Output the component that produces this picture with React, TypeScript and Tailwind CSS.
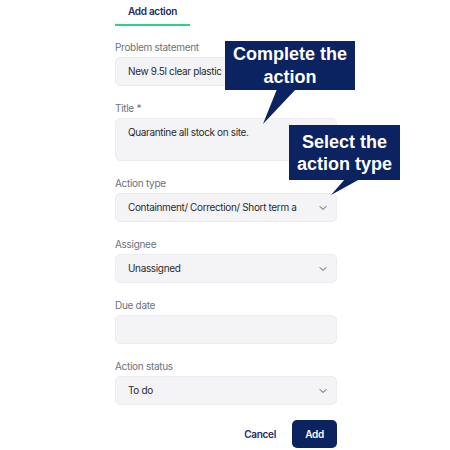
import React from "react";
import { ChevronDown } from "lucide-react";

const txt = "text-[10px] tracking-[-0.35px]";

function Label({ children }: { children: React.ReactNode }) {
  return (
    <div className={"text-[10px] tracking-[-0.3px] leading-[18px] mb-[1px] text-[#6b7280]"}>{children}</div>
  );
}

function Field({
  label,
  children,
}: {
  label: string;
  children: React.ReactNode;
}) {
  return (
    <div className="flex flex-col">
      <Label>{label}</Label>
      {children}
    </div>
  );
}

function Select({ value }: { value: string }) {
  return (
    <div className="h-[29px] rounded-[5px] bg-[#f4f4f6] border border-[#ececf0] flex items-center pl-[12px] pr-[7px]">
      <span className="text-[10px] tracking-[-0.35px] text-[#2b2b2b] whitespace-nowrap">
        {value}
      </span>
      <span className="flex-1" />
      <ChevronDown size={12} strokeWidth={2} className="text-[#4b5563]" />
    </div>
  );
}

export default function App() {
  return (
    <div
      className="relative w-[450px] h-[450px] bg-white overflow-hidden"
      style={{ fontFamily: "Inter, 'Noto Sans', sans-serif" }}
    >
      <div className="ml-[115px] w-[222px] flex flex-col">
        <div className="flex">
          <div className="px-[13px] pt-[4px] pb-[6px] border-b-2 border-[#2fd08a] text-[10px] tracking-[-0.3px] leading-[14px] font-semibold text-[#1e2a5e]">
            Add action
          </div>
        </div>
        <div className="mt-[12px] flex flex-col gap-[13px]">
          <Field label="Problem statement">
            <div className="h-[29px] rounded-[5px] bg-[#f4f4f6] border border-[#ececf0] flex items-center pl-[12px]">
              <span className={txt + " text-[#2b2b2b] whitespace-nowrap"}>
                New 9.5l clear plastic
              </span>
            </div>
          </Field>
          <Field label="Title *">
            <div className={"h-[43px] rounded-[5px] bg-[#f4f4f6] border border-[#ececf0] pl-[12px] pt-[6px] leading-[14px] text-[#2b2b2b] " + txt}>
              Quarantine all stock on site.
            </div>
          </Field>
          <Field label="Action type">
            <Select value="Containment/ Correction/ Short term a" />
          </Field>
          <Field label="Assignee">
            <Select value="Unassigned" />
          </Field>
          <Field label="Due date">
            <div className="h-[29px] rounded-[5px] bg-[#f4f4f6] border border-[#ececf0]" />
          </Field>
          <Field label="Action status">
            <Select value="To do" />
          </Field>
        </div>
        <div className="mt-[15px] flex justify-end items-center gap-[4px]">
          <button className="h-[28px] px-[12px] text-[10px] tracking-[-0.3px] font-semibold text-[#1e2a5e]">
            Cancel
          </button>
          <button className="h-[28px] w-[45px] rounded-[5px] bg-[#0b2361] text-[10px] tracking-[-0.3px] font-semibold text-white">
            Add
          </button>
        </div>
      </div>

      {/* Callout 1 */}
      <div
        className="absolute left-[225px] top-[41px] w-[130px] h-[49px] bg-[#0b2361] flex items-center justify-center text-center text-white text-[18px] leading-[23px] font-bold"
        style={{ fontFamily: "'Liberation Sans', Arial, sans-serif" }}
      >
        Complete the
        <br />
        action
      </div>
      <svg
        className="absolute left-[260px] top-[89px]"
        width="40"
        height="36"
        viewBox="0 0 40 36"
      >
        <polygon points="17,0 36,0 3,35" fill="#0b2361" />
      </svg>

      {/* Callout 2 */}
      <div
        className="absolute left-[289px] top-[125px] w-[111px] h-[55px] bg-[#0b2361] flex items-center justify-center text-center text-white text-[18px] leading-[22px] font-bold"
        style={{ fontFamily: "'Liberation Sans', Arial, sans-serif" }}
      >
        Select the
        <br />
        action type
      </div>
      <svg
        className="absolute left-[328px] top-[179px]"
        width="35"
        height="18"
        viewBox="0 0 35 18"
      >
        <polygon points="17,0 32,0 3,16" fill="#0b2361" />
      </svg>
    </div>
  );
}
